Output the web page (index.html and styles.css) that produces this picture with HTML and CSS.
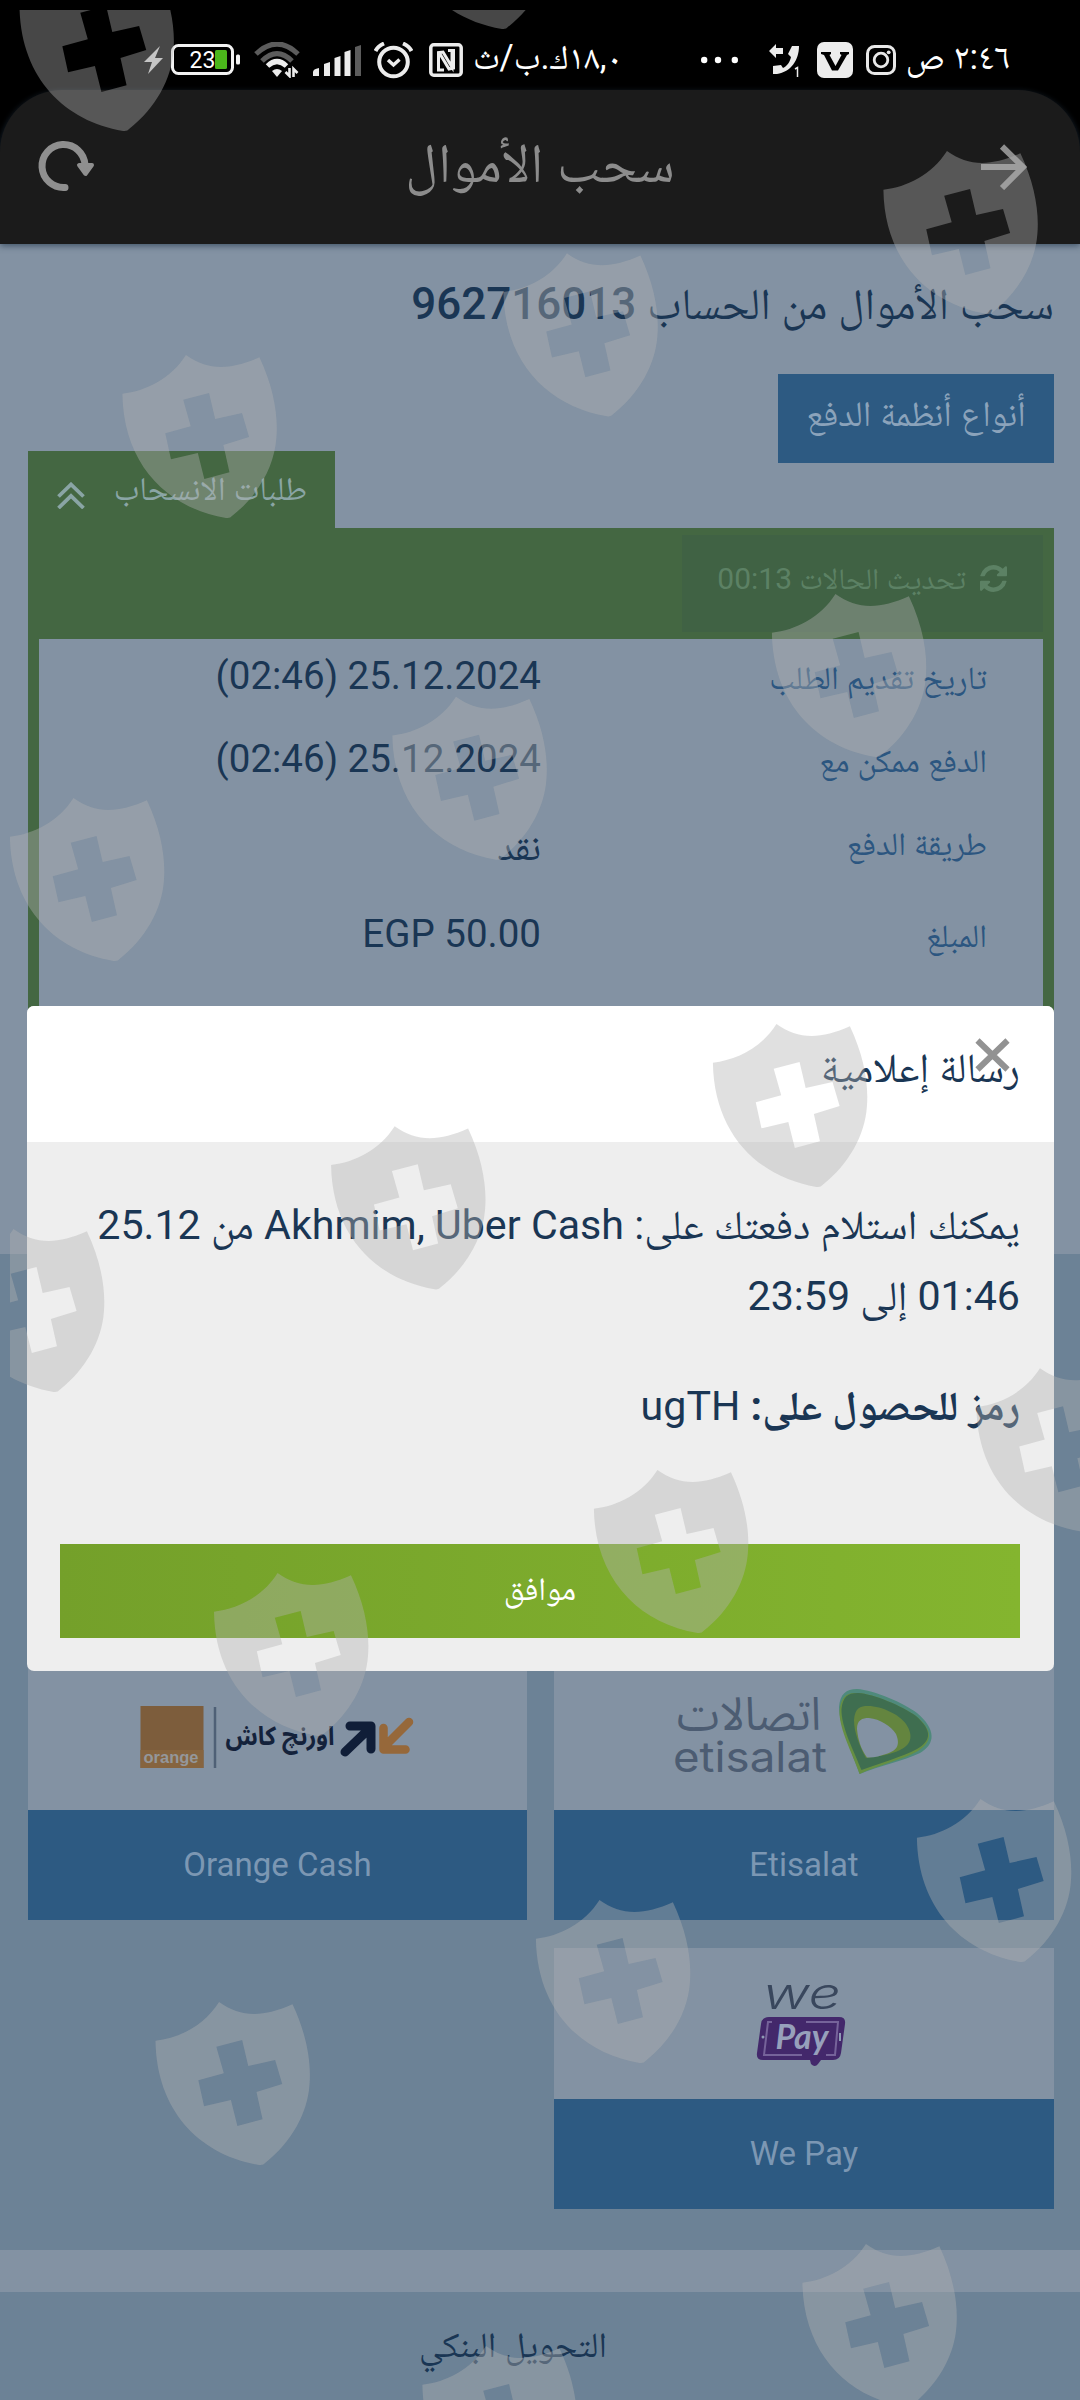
FILE: index.html
```html
<!DOCTYPE html>
<html lang="ar" dir="rtl">

<head>
    <meta charset="UTF-8">
    <meta name="viewport" content="width=device-width, initial-scale=1.0">
    <title>سحب الأموال</title>
    <link rel="stylesheet" href="styles.css">
</head>

<body>

    <!-- Status bar -->
    <div class="status-bar">
        <span class="clock">٢:٤٦ ص</span>
        <svg class="icon-instagram" viewBox="0 0 30 30">
            <rect x="1.5" y="1.5" width="27" height="27" rx="7" fill="none" stroke="#e8e8e8" stroke-width="3"/>
            <circle cx="15" cy="15" r="6.8" fill="none" stroke="#e8e8e8" stroke-width="2.8"/>
            <circle cx="22.7" cy="7.3" r="1.9" fill="#e8e8e8"/>
        </svg>
        <svg class="icon-v" viewBox="0 0 36 36">
            <rect width="36" height="36" rx="7" fill="#ececec"/>
            <path d="M4 10h10v2l-1.500 1 6 11 6-11-1.500-1V10h9v2l-2 1-9 15.500h-6L7 13l-3-1z" fill="#000"/>
        </svg>
        <svg class="icon-phone" viewBox="0 0 31 33">
            <path d="M0 7l7-7v4h7v6H7v4z" fill="#ececec"/>
            <path d="M23 2h7c0 14-8 26-22 28H4v-8l8-1 2 3c4-2 7-6 8-11l-3-3z" fill="#ececec"/>
            <path d="M26 25l2.500-1.500V33" fill="none" stroke="#ececec" stroke-width="1.500"/>
        </svg>
        <svg class="icon-dots" viewBox="0 0 37 8">
            <circle cx="3.200" cy="4" r="3.200" fill="#fff"/>
            <circle cx="17" cy="4" r="3.200" fill="#fff"/>
            <circle cx="33.800" cy="4" r="3.200" fill="#fff"/>
        </svg>
        <span class="net-speed">١٨,٠ك.ب/ث</span>
        <svg class="icon-nfc" viewBox="0 0 34 34">
            <rect x="1.800" y="1.800" width="30.400" height="30.400" rx="3" fill="none" stroke="#ececec" stroke-width="3.500"/>
            <path d="M15 27H9.500V9.500L14 9l9 15V8.500M19 7.500h5.500V25l-4.500 1-9-15" fill="none" stroke="#ececec" stroke-width="3"/>
        </svg>
        <svg class="icon-alarm" viewBox="0 0 39 37">
            <circle cx="19.500" cy="20" r="14.300" fill="none" stroke="#ececec" stroke-width="4"/>
            <path d="M14 18l5.500 5 6-5.500" fill="none" stroke="#ececec" stroke-width="3.500"/>
            <path d="M1.500 9Q4 4 10 1.500M37.500 9Q35 4 29 1.500" fill="none" stroke="#ececec" stroke-width="4"/>
        </svg>
        <svg class="icon-signal" viewBox="0 0 48 31">
            <g fill="#ececec">
                <path d="M0 31v-4q0-3 6-4v8z"/>
                <path d="M11 31V19l6-2v14z"/>
                <path d="M21.500 31V13l6-2v20z"/>
                <path d="M31.500 31V7l6-2v26z"/>
            </g>
            <path d="M42 31V2l6-2v31z" fill="#5c5c5c"/>
        </svg>
        <svg class="icon-wifi" viewBox="0 0 46 36">
            <path d="M2 12Q23-8 44 12M8 19Q23 4 38 19" fill="none" stroke="#5c5c5c" stroke-width="5"/>
            <path d="M13.500 24Q23 15 32.500 24" fill="none" stroke="#ececec" stroke-width="5"/>
            <path d="M18 29q5-4 10 0l-5 6z" fill="#ececec"/>
            <path d="M35.500 26v8l-4-4M39.500 35v-8l4 4" fill="none" stroke="#ececec" stroke-width="2.600"/>
        </svg>
        <svg class="icon-battery" viewBox="0 0 69 32">
            <rect x="1.500" y="1.500" width="60" height="28" rx="6" fill="none" stroke="#f2f2f2" stroke-width="3"/>
            <rect x="65" y="10.500" width="4" height="10" rx="1.500" fill="#f2f2f2"/>
            <rect x="44" y="6" width="12" height="19" rx="1.500" fill="#4bb71b"/>
            <text x="18.500" y="24" class="battery-text">23</text>
        </svg>
        <svg class="icon-bolt" viewBox="0 0 19 28">
            <path d="M16 0L0 16h8l-4 12 15-16h-8z" fill="#d2d2d2"/>
        </svg>
    </div>

    <!-- App header -->
    <div class="header">
        <div class="header-side">
            <svg class="icon-back" viewBox="0 0 46 46">
                <path d="M0 23h41M21 2.500L42 23 21 44" fill="none" stroke="#8f8f8f" stroke-width="6"/>
            </svg>
        </div>
        <h1>سحب الأموال</h1>
        <div class="header-side header-left">
            <svg class="icon-reload" viewBox="0 0 60 56">
                <path d="M29 48.500A21.500 21.500 0 1 1 49 26" fill="none" stroke="#8f8f8f" stroke-width="7" stroke-linecap="round"/>
                <path d="M43 26h13l-6.500 9z" fill="#8f8f8f" stroke="#8f8f8f" stroke-width="4" stroke-linejoin="round"/>
            </svg>
        </div>
    </div>

    <!-- Withdrawal requests -->
    <div class="requests">
        <h2>سحب الأموال من الحساب <span class="account">962716013</span></h2>
        <button class="systems-btn">أنواع أنظمة الدفع</button>

        <div class="tab">
            <span>طلبات الانسحاب</span>
            <svg class="icon-chevrons" viewBox="0 0 28 27">
                <path d="M1.500 14.500L14 2.500l12.500 12M1.500 26L14 14l12.500 12" fill="none" stroke="#8aa5a5" stroke-width="3.800"/>
            </svg>
        </div>
        <div class="panel">
            <div class="panel-top">
                <div class="refresh">
                    <svg class="icon-refresh" viewBox="128 128 1536 1536">
                        <path fill="#5c8164" d="M1639 1056q0 5-1 7-64 268-268 434.500t-478 166.500q-146 0-282.500-55t-243.500-157l-129 129q-19 19-45 19t-45-19-19-45v-448q0-26 19-45t45-19h448q26 0 45 19t19 45-19 45l-137 137q71 66 161 102t187 36q134 0 250-65t186-179q11-17 53-117 8-23 30-23h192q13 0 22.500 9.500t9.500 22.500zm25-800v448q0 26-19 45t-45 19h-448q-26 0-45-19t-19-45 19-45l138-138q-148-137-349-137-134 0-250 65t-186 179q-11 17-53 117-8 23-30 23h-199q-13 0-22.500-9.500t-9.500-22.500v-7q65-268 270-434.500t480-166.500q146 0 284 55.500t245 156.500l130-129q19-19 45-19t45 19 19 45z"/>
                    </svg>
                    <span>تحديث الحالات 00:13</span>
                </div>
            </div>
            <div class="rows">
                <div class="row">
                    <span class="label">تاريخ تقديم الطلب</span>
                    <span class="value" dir="ltr">(02:46) 25.12.2024</span>
                </div>
                <div class="row">
                    <span class="label">الدفع ممكن مع</span>
                    <span class="value" dir="ltr">(02:46) 25.12.2024</span>
                </div>
                <div class="row row-method">
                    <span class="label">طريقة الدفع</span>
                    <span class="value">نقد</span>
                </div>
                <div class="row">
                    <span class="label">المبلغ</span>
                    <span class="value" dir="ltr">EGP 50.00</span>
                </div>
            </div>
        </div>
    </div>

    <!-- Payment systems -->
    <div class="systems">
        <div class="card">
            <div class="card-logo">
                <svg class="logo-etisalat" viewBox="0 0 258 86">
                    <text x="75" y="41" class="etisalat-ar" text-anchor="middle" textLength="144" lengthAdjust="spacingAndGlyphs">اتصالات</text>
                    <text x="76" y="83" class="etisalat-en" text-anchor="middle" textLength="154" lengthAdjust="spacingAndGlyphs">etisalat</text>
                    <path d="M165 18C166 5 172 0 183 0C200 1 230 14 243 24C262 40 262 55 246 64C230 72 204 77 185.600 85C178 63 165 36 165 18z" fill="#4f8a7c"/>
                    <path d="M165.500 22C167 8 172 3 184 4C200 5 228 17 242 27C260 42 258 53 244 62C228 71 204 76 185.600 85C178 63 165 40 165.500 22z" fill="#668f43"/>
                    <path d="M167.500 20C169 8 173 4 184 4C200 5 228 17 242 27C259 42 257 52 243 60C228 68 206 74 187.500 81C180 62 167 38 167.500 20z" fill="#3f6e50"/>
                    <path d="M180 31C181 19 186 17 194 17C208 17 226 26 232 35C240 47 237 56 226 61C216 66 205 67 192 69C186 58 180 44 180 31z" fill="#64853f"/>
                    <path d="M183 40C183 31 188 29 195 29C206 30 217 37 222 45C227 57 222 62 212 65C206 67 200 69 193 68.500C187 60 184 51 183 40z" fill="#8392a3"/>
                </svg>
            </div>
            <div class="card-name">Etisalat</div>
        </div>
        <div class="card">
            <div class="card-logo">
                <svg class="logo-orange" viewBox="0 0 274 66">
                    <rect x="0.500" y="2" width="63" height="62" fill="#7d5d3c"/>
                    <rect x="0.500" y="46" width="63" height="18" fill="#86643f"/>
                    <text x="31" y="58.500" class="orange-en" text-anchor="middle" textLength="55" lengthAdjust="spacingAndGlyphs">orange</text>
                    <path d="M75 3v61" stroke="#4f6076" stroke-width="2.500"/>
                    <text x="140" y="41" class="orange-ar" text-anchor="middle" textLength="109" lengthAdjust="spacingAndGlyphs">اورنچ كاش</text>
                    <path d="M205 48L230 24M210 22h21v23" fill="none" stroke="#101e38" stroke-width="9" stroke-linecap="round" stroke-linejoin="round"/>
                    <path d="M269 18L245 42M243.500 24v21.500h22" fill="none" stroke="#96683a" stroke-width="8.500" stroke-linecap="round" stroke-linejoin="round"/>
                </svg>
            </div>
            <div class="card-name">Orange Cash</div>
        </div>
        <div class="card">
            <div class="card-logo">
                <svg class="logo-we" viewBox="0 0 90 84">
                    <text x="46" y="27" class="we-text" text-anchor="middle" textLength="78" lengthAdjust="spacingAndGlyphs">we</text>
                    <path d="M13 35h70q7 0 6 7l-4 29q-1 7-8 7h-12l-3 4q-3 4-7 0l-1-4H7q-7 0-6-7l4-29q1-7 8-7z" fill="#43286b"/>
                    <path d="M16 40H12L8 73h38M70 73h9l3-33H50" fill="none" stroke="#76639a" stroke-width="2"/>
                    <circle cx="7" cy="55" r="1.500" fill="#8f9bb5"/>
                    <path d="M84 51v8" stroke="#8f9bb5" stroke-width="2"/>
                    <text x="46" y="67" class="pay-text" text-anchor="middle" textLength="53" lengthAdjust="spacingAndGlyphs">Pay</text>
                </svg>
            </div>
            <div class="card-name">We Pay</div>
        </div>
    </div>

    <div class="divider"></div>
    <div class="bank">التحويل البنكي</div>

    <!-- Message window -->
    <div class="modal">
        <div class="modal-head">
            رسالة إعلامية
            <svg class="modal-close" viewBox="0 0 35 34">
                <path d="M2.500 2.500l30 29M32.500 2.500l-30 29" stroke="#929292" stroke-width="6"/>
            </svg>
        </div>
        <div class="modal-body">
            <p>يمكنك استلام دفعتك على: Akhmim, Uber Cash من 25.12 01:46 إلى 23:59</p>
            <p><b>رمز للحصول على:</b> ugTH</p>
            <button class="ok-btn">موافق</button>
        </div>
    </div>

    <!-- Shield pattern -->
    <svg class="shields" viewBox="10 10 1070 2390">
        <defs>
            <path id="shield" fill-rule="evenodd" transform="translate(0.9 0) scale(0.987 1)" d="M0 38.700C24 36 49 24 64.400 0C86 15.500 109 15.500 138.800 2.300C153 32 158 60 156 83C154 111 138 140 111 161Q109.500 163.500 105 163C45 153 1 109 0 38.700zM61.600 44.700L69.200 71.300 43.400 78.300 49.200 104.300 76.400 98 83 124 108.500 117.300 102.300 90 128.400 82 121.200 58 94 64 87.800 38z"/>
        </defs>
        <g fill="#b1b1b1" fill-opacity="0.4">
            <use href="#shield" x="18.600" y="-32"/>
            <use href="#shield" x="397.400" y="-134"/>
            <use href="#shield" x="882.500" y="151"/>
            <use href="#shield" x="121.500" y="355"/>
            <use href="#shield" x="502.500" y="253.300"/>
            <use href="#shield" x="771" y="594"/>
            <use href="#shield" x="391.500" y="696.700"/>
            <use href="#shield" x="9" y="798"/>
            <use href="#shield" x="330.200" y="1126.300"/>
            <use href="#shield" x="-51" y="1229"/>
            <use href="#shield" x="712" y="1024"/>
            <use href="#shield" x="975.500" y="1368.300"/>
            <use href="#shield" x="593" y="1470"/>
            <use href="#shield" x="213.100" y="1573"/>
            <use href="#shield" x="916" y="1799"/>
            <use href="#shield" x="535" y="1900"/>
            <use href="#shield" x="154.600" y="2002"/>
            <use href="#shield" x="801.500" y="2244"/>
            <use href="#shield" x="421.500" y="2346"/>
        </g>
    </svg>

</body>

</html>
```
FILE: styles.css
```css
* {
    box-sizing: border-box;
}

body {
    margin: 0;
    width: 1080px;
    height: 2400px;
    position: relative;
    overflow: hidden;
    background-color: #000;
    color: #1a3654;
    font-family: Roboto, "Noto Naskh Arabic", "DejaVu Sans", sans-serif;
}

h1, h2, p {
    margin: 0;
    font-weight: normal;
}

svg {
    display: block;
    flex: none;
    direction: ltr;
}

button {
    border: none;
    padding: 0;
    font-family: inherit;
}

/* Status bar */
.status-bar {
    height: 90px;
    padding: 30px 70px 0 0;
    display: flex;
    align-items: center;
    color: #fff;
    line-height: 60px;
    white-space: nowrap;
}

.clock {
    width: 103px;
    font-size: 35.5px;
    padding-bottom: 6px;
}

.icon-instagram {
    width: 30px;
    margin-right: 11px;
}

.icon-v {
    width: 36px;
    margin-right: 13px;
}

.icon-phone {
    width: 31px;
    margin-right: 17px;
}

.icon-dots {
    width: 37px;
    margin-right: 31px;
}

.net-speed {
    width: 148px;
    margin-right: 79px;
    font-size: 34.5px;
    padding-bottom: 6px;
}

.icon-nfc {
    width: 34px;
    margin-right: 11px;
}

.icon-alarm {
    width: 39px;
    margin-right: 16px;
}

.icon-signal {
    width: 48px;
    margin-right: 13px;
}

.icon-wifi {
    width: 46px;
    margin-right: 13px;
}

.icon-battery {
    width: 69px;
    margin-right: 14px;
}

.battery-text {
    font-size: 23px;
    fill: #fff;
}

.icon-bolt {
    width: 19px;
    margin-right: 8px;
}

/* Header */
.header {
    height: 154px;
    position: relative;
    display: grid;
    grid-template-columns: 1fr auto 1fr;
    align-items: center;
    background-color: #1b1b1b;
    border-radius: 62px 62px 0 0;
    box-shadow: 0 2px 6px rgba(40, 60, 80, 0.7);
}

.header h1 {
    font-size: 55px;
    line-height: 147px;
    height: 154px;
    color: #8c8c8c;
}

.header-side {
    padding: 0 53px 0 36px;
    display: flex;
}

.header-left {
    justify-content: flex-end;
}

.icon-back {
    width: 46px;
}

.icon-reload {
    width: 60px;
}

/* Requests */
.requests {
    height: 1010px;
    padding: 30px 26px 0 28px;
    background-color: #8392a3;
    overflow: hidden;
}

.requests h2 {
    font-size: 44px;
    line-height: 60px;
    margin-bottom: 40px;
}

.account {
    font-weight: 500;
}

.systems-btn {
    display: block;
    width: 276px;
    height: 89px;
    padding-bottom: 9px;
    background-color: #2d5a82;
    color: #8ba3bb;
    font-size: 35.7px;
    line-height: 80px;
}

.tab {
    width: 307px;
    height: 77px;
    margin: -12px auto 0 0;
    padding: 0 28px 0 29px;
    display: flex;
    justify-content: space-between;
    background-color: #446742;
    color: #8aa5a5;
    font-size: 33px;
    line-height: 76px;
}

.icon-chevrons {
    width: 28px;
    margin-top: 31px;
    height: 27px;
}

.panel {
    height: 700px;
    padding: 0 11px;
    background-color: #446742;
}

.panel-top {
    height: 111px;
    padding-top: 7px;
}

.refresh {
    width: 361px;
    height: 97px;
    padding-right: 36px;
    display: flex;
    gap: 14px;
    background-color: #406244;
    color: #5c8164;
    font-size: 30px;
    line-height: 88px;
}

.icon-refresh {
    width: 27px;
    height: 27px;
    margin-top: 30px;
}

.rows {
    height: 590px;
    background-color: #8392a3;
}

.row {
    height: 83px;
    padding-right: 56px;
    display: grid;
    grid-template-columns: 446px 1fr;
    align-items: baseline;
    line-height: 73px;
}

.row-method {
    height: 92px;
}

.row-method .value {
    position: relative;
    top: 5px;
}

.label {
    font-size: 32.5px;
    color: #2c5680;
}

.value {
    width: 330px;
    font-size: 38.5px;
    text-align: right;
}

/* Payment systems */
.systems {
    height: 996px;
    padding: 405px 26px 41px 28px;
    display: grid;
    grid-template-columns: 500px 499px;
    grid-auto-rows: 261px;
    gap: 28px 27px;
    background-color: #6c8296;
}

.card {
    display: flex;
    flex-direction: column;
    background-color: #8392a3;
}

.card-logo {
    flex: 1;
    display: flex;
    align-items: center;
    justify-content: center;
}

.card-logo svg {
    overflow: visible;
}

.card-name {
    height: 110px;
    background-color: #2d5a82;
    color: #7c97b3;
    font-size: 33px;
    line-height: 110px;
    text-align: center;
}

.logo-etisalat {
    width: 258px;
    margin: 0 3px 6px 0;
}

.etisalat-ar {
    font-family: "Noto Sans Arabic", "DejaVu Sans", sans-serif;
    font-size: 46px;
    fill: #4c5c72;
}

.etisalat-en {
    font-family: Inter, sans-serif;
    font-size: 42px;
    fill: #4c5c72;
}

.logo-orange {
    width: 274px;
    margin: 4px 2px 0 0;
}

.orange-en {
    font-family: "Liberation Sans", sans-serif;
    font-size: 17px;
    font-weight: bold;
    fill: #94979b;
}

.orange-ar {
    font-family: "Noto Sans Arabic", "DejaVu Sans", sans-serif;
    font-size: 26px;
    font-weight: bold;
    fill: #14223b;
}

.logo-we {
    width: 90px;
    margin-right: 6px;
}

.we-text {
    font-family: Inter, sans-serif;
    font-size: 43px;
    font-weight: 300;
    font-style: italic;
    fill: #39475d;
}

.pay-text {
    font-family: Lato, sans-serif;
    font-size: 34px;
    font-weight: bold;
    font-style: italic;
    fill: #97a0bb;
}

.divider {
    height: 42px;
    background-color: #8392a3;
}

.bank {
    height: 108px;
    padding-right: 80px;
    padding-left: 26px;
    background-color: #6c8296;
    font-size: 35.4px;
    line-height: 107px;
    text-align: center;
}

/* Message window */
.modal {
    position: absolute;
    top: 1006px;
    left: 27px;
    width: 1027px;
    height: 665px;
    border-radius: 7px;
    overflow: hidden;
    background-color: #eee;
    font-size: 41.2px;
}

.modal-head {
    height: 136px;
    padding: 0 34px;
    background-color: #fff;
    line-height: 124px;
}

.modal-close {
    position: absolute;
    top: 32px;
    right: 44px;
    width: 35px;
}

.modal-body {
    padding: 48px 34px 34px 33px;
    line-height: 71px;
}

.modal-body p {
    margin-bottom: 39px;
}

.ok-btn {
    display: block;
    width: 100%;
    height: 94px;
    margin-top: 102px;
    padding-bottom: 3px;
    background: linear-gradient(to right, #74a02a, #84b52f);
    color: #fff;
    font-size: 32.5px;
    line-height: 91px;
}

/* Shields lie over the whole screen */
.shields {
    position: absolute;
    top: 10px;
    left: 10px;
    width: 1070px;
    height: 2390px;
}
```
